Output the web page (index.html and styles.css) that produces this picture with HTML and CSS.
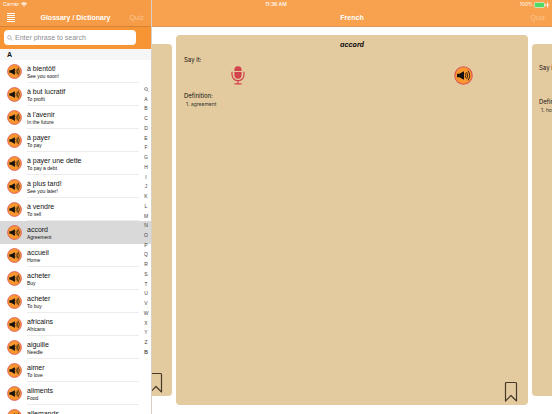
FILE: index.html
```html
<!DOCTYPE html>
<html lang="en">
<head>
    <meta charset="UTF-8">
    <meta name="viewport" content="width=device-width, initial-scale=1.0">
    <title>Glossary / Dictionary</title>
    <link rel="stylesheet" href="styles.css">
</head>
<body>
    <!-- Shared icons -->
    <svg class="icon-defs" aria-hidden="true">
        <symbol id="icon-speaker" viewBox="0 0 20 20">
            <circle cx="10" cy="10" r="9.2" fill="#fa982f" stroke="#d9525a" stroke-width="1.1"/>
            <path d="M3.2 8.2h2.3l5-2.7v9l-5-2.7H3.2z" fill="#15100a"/>
            <path d="M11.8 7.7q1.4 2.3 0 4.6M13.3 6.3q2.3 3.7 0 7.4M14.8 4.9q3.4 5.1 0 10.2" fill="none" stroke="#2b1b0c" stroke-width="1"/>
        </symbol>
        <symbol id="icon-search" viewBox="0 0 10 10">
            <circle cx="4" cy="4" r="3" fill="none" stroke="currentColor"/>
            <path d="M6.2 6.2L9.2 9.2" stroke="currentColor"/>
        </symbol>
        <symbol id="icon-bookmark" viewBox="0 0 14 21">
            <path d="M1.5 20V2.5q0-1 1-1h9q1 0 1 1V20L7 14.5z" fill="none" stroke="#46392b" stroke-width="1.2" stroke-linejoin="round"/>
        </symbol>
    </svg>

    <div class="app">
        <aside class="sidebar">
            <header class="top-bar sidebar-bar">
                <div class="status">
                    <span>Carrier</span>
                    <svg class="wifi" viewBox="0 0 12 10"><path d="M0 3.4Q6-2 12 3.4L10.7 4.8Q6 .7 1.3 4.8zM2.2 5.7Q6 2.4 9.8 5.7L8.4 7.1Q6 5 3.6 7.1zM4.4 8Q6 6.8 7.6 8L6 9.8z" fill="#fff"/></svg>
                </div>
                <div class="nav-row">
                    <button class="menu-btn" type="button" aria-label="Menu">
                        <svg viewBox="0 0 8 9"><path d="M0 .5h8M0 2.5h8M0 4.5h8M0 6.5h8M0 8.5h8" stroke="#fff" stroke-width="1"/></svg>
                    </button>
                    <h1>Glossary / Dictionary</h1>
                    <button class="quiz-btn" type="button">Quiz</button>
                </div>
            </header>
            <div class="search-bar">
                <label class="search-box">
                    <svg class="search-icon" aria-hidden="true"><use href="#icon-search"/></svg>
                    <input type="text" placeholder="Enter phrase to search" aria-label="Enter phrase to search">
                </label>
            </div>
            <div class="glossary">
                <h2 class="letter">A</h2>
                <ul class="words" id="words"></ul>
                <nav class="letter-index" id="letter-index" aria-label="Letters"></nav>
            </div>
        </aside>

        <main class="detail">
            <header class="top-bar">
                <div class="status">
                    <span></span>
                    <span class="clock">11:36 AM</span>
                    <span class="battery">100%
                        <svg viewBox="0 0 15 6"><rect x=".4" y=".4" width="10" height="5.2" rx="1.2" fill="#4cd964" stroke="#fff" stroke-width=".6"/><path d="M11.3 2v2" stroke="#fff" stroke-width=".8"/><path d="M13.6 .6v4.8M12.4 3h2.4" stroke="#fff" stroke-width=".9"/></svg>
                    </span>
                </div>
                <div class="nav-row">
                    <span></span>
                    <h1>French</h1>
                    <button class="quiz-btn" type="button">Quiz</button>
                </div>
            </header>
            <div class="cards">
                <section class="card side-card previous">
                    <button class="bookmark" type="button" aria-label="Bookmark"><svg><use href="#icon-bookmark"/></svg></button>
                </section>
                <section class="card current">
                    <h2>accord</h2>
                    <p class="label">Say it:</p>
                    <div class="say-it">
                        <button type="button" aria-label="Record">
                            <svg class="mic" viewBox="0 0 14 20">
                                <path d="M3.2 5.3V4a3.8 3.8 0 0 1 7.6 0v1.3zM3.2 6.3h7.6v3.2a3.8 3.8 0 0 1-7.6 0z" fill="#d3424d"/>
                                <path d="M.7 6v3.2a6.3 6.3 0 0 0 12.6 0V6M7 15.5v3M3.2 18.8h7.6" fill="none" stroke="#d3424d" stroke-width="1.3"/>
                            </svg>
                        </button>
                        <button type="button" aria-label="Listen"><svg class="listen"><use href="#icon-speaker"/></svg></button>
                    </div>
                    <p class="label">Definition:</p>
                    <p class="definition">1. agreement</p>
                    <button class="bookmark" type="button" aria-label="Bookmark"><svg><use href="#icon-bookmark"/></svg></button>
                </section>
                <section class="card side-card next">
                    <p class="label">Say it:</p>
                    <p class="label next-label">Definition:</p>
                    <p class="definition">1. home</p>
                </section>
            </div>
        </main>
    </div>

    <script>
        const words = [
            ['à bientôt!', 'See you soon!'],
            ['à but lucratif', 'To profit'],
            ["à l'avenir", 'In the future'],
            ['à payer', 'To pay'],
            ['à payer une dette', 'To pay a debt'],
            ['à plus tard!', 'See you later!'],
            ['à vendre', 'To sell'],
            ['accord', 'Agreement'],
            ['accueil', 'Home'],
            ['acheter', 'Buy'],
            ['acheter', 'To buy'],
            ['africains', 'Africans'],
            ['aiguille', 'Needle'],
            ['aimer', 'To love'],
            ['aliments', 'Food'],
            ['allemands', '']
        ];
        const selected = 7;

        document.getElementById('words').innerHTML = words.map(([french, english], i) => `
            <li class="word${i === selected ? ' selected' : ''}">
                <button class="speak" type="button" aria-label="Listen"><svg><use href="#icon-speaker"/></svg></button>
                <div class="word-text">
                    <span class="french">${french}</span>
                    <span class="english">${english}</span>
                </div>
            </li>
        `).join('');

        const letters = [...'ABCDEFGHIJKLMNOPQRSTUVWXYZ', 'B'];
        document.getElementById('letter-index').innerHTML =
            '<a href="#search" aria-label="Search"><svg><use href="#icon-search"/></svg></a>' +
            letters.map((l, i) => `<a href="#${l}"${i === 26 ? ' class="last"' : ''}>${l}</a>`).join('');
    </script>
</body>
</html>
```
FILE: styles.css
```css
* {
    box-sizing: border-box;
}
body {
    margin: 0;
    font-family: "Liberation Sans", Arial, sans-serif;
    color: #111;
    background: #fff;
}
h1, h2, p, ul {
    margin: 0;
    padding: 0;
}
button {
    padding: 0;
    border: none;
    background: none;
    font-family: inherit;
    cursor: pointer;
}
svg {
    display: block;
}
.icon-defs {
    position: absolute;
    width: 0;
    height: 0;
}
.app {
    display: grid;
    grid-template-columns: minmax(152px, 27%) 1fr;
    height: 100vh;
    overflow: hidden;
}

/* Top bars */
.top-bar {
    background: #f8a250;
    color: #fff;
    border-bottom: 1px solid #e0995a;
}
.sidebar-bar {
    background: #f79c46;
    border-bottom-color: #d58437;
}
.status {
    display: flex;
    align-items: center;
    height: 9px;
    padding: 0 3px;
    font-family: Inter, sans-serif;
    font-size: 5px;
    line-height: 9px;
}
.detail .status {
    display: grid;
    grid-template-columns: 1fr auto 1fr;
    /* the clock is centred on the whole window, not on the detail pane */
    margin-left: -152px;
}
.wifi {
    width: 6px;
    height: 5px;
    margin-left: 2px;
}
.clock {
    font-weight: 500;
}
.battery {
    display: flex;
    justify-content: flex-end;
    align-items: center;
    gap: 1px;
}
.battery svg {
    width: 15px;
    height: 6px;
}
.nav-row {
    display: grid;
    grid-template-columns: 1fr auto 1fr;
    align-items: center;
    height: 17px;
    padding: 0 7px;
}
.nav-row h1 {
    font-size: 7px;
    font-weight: 700;
    line-height: 16px;
}
.menu-btn svg {
    width: 8px;
    height: 9px;
}
.quiz-btn {
    justify-self: end;
    font-size: 7px;
    color: #fbc591;
}

/* Sidebar */
.sidebar {
    display: flex;
    flex-direction: column;
    min-height: 0;
    position: relative;
    z-index: 1;
    background: #fff;
    border-right: 1px solid #d8d0c4;
}
.search-bar {
    padding: 3px 15px 4px 4px;
    background: #f79433;
}
.search-box {
    display: flex;
    align-items: center;
    gap: 2px;
    height: 15px;
    padding: 0 3px;
    border-radius: 4px;
    background: #fff;
    color: #8e8e93;
}
.search-icon {
    width: 6px;
    height: 6px;
}
.search-box input {
    flex: 1;
    min-width: 0;
    padding: 0;
    border: none;
    outline: none;
    background: none;
    font-family: inherit;
    font-size: 7px;
}
.search-box input::placeholder {
    color: #8e8e93;
}
.glossary {
    position: relative;
    flex: 1;
    min-height: 0;
    overflow: hidden;
}
.letter {
    padding-left: 7px;
    background: #f6f6f6;
    font-size: 7px;
    font-weight: 700;
    line-height: 11px;
}
.words {
    list-style: none;
}
.word {
    display: flex;
    height: 23px;
    padding: 0 12px 0 7px;
    gap: 5px;
    align-items: center;
}
.word.selected {
    background: #d9d9d9;
}
.speak svg {
    width: 15px;
    height: 15px;
}
.word-text {
    display: flex;
    flex-direction: column;
    flex: 1;
    height: 23px;
    padding-top: 4px;
    border-bottom: 1px solid #ececec;
}
.word.selected .word-text {
    border-bottom-color: transparent;
}
.french {
    font-size: 7px;
    line-height: 9px;
}
.english {
    font-size: 5px;
    line-height: 7px;
}
.letter-index {
    position: absolute;
    top: 36px;
    right: 1px;
    display: flex;
    flex-direction: column;
    justify-content: space-between;
    align-items: center;
    width: 8px;
    height: 272px;
}
.letter-index a {
    color: #444;
    font-size: 5px;
    line-height: 9px;
    text-decoration: none;
}
.letter-index a.last {
    font-weight: 700;
}
.letter-index svg {
    width: 5px;
    height: 9px;
}

/* Flash cards */
.detail {
    display: flex;
    flex-direction: column;
    min-width: 0;
    min-height: 0;
}
.cards {
    flex: 1;
    display: grid;
    grid-template-columns: 20px 1fr 20px;
    gap: 4px;
    min-height: 0;
    padding: 8px 0 9px;
    font-family: Inter, sans-serif;
}
.card {
    display: flex;
    flex-direction: column;
    min-width: 0;
    border-radius: 4px;
    background: #e4cb9f;
    overflow: hidden;
    white-space: nowrap;
}
.side-card {
    margin: 9px 0;
}
.previous {
    border-radius: 0 4px 4px 0;
}
.next {
    padding: 19px 0 0 7px;
    border-radius: 4px 0 0 4px;
}
.next-label {
    margin-top: 25px;
}
.current {
    padding: 5px 8px 0;
}
.card h2 {
    font-size: 7px;
    font-weight: 700;
    font-style: italic;
    line-height: 10px;
    text-align: center;
}
.label {
    font-size: 6px;
    line-height: 9px;
}
.card h2 + .label {
    margin-top: 5px;
}
.definition {
    padding: 0 2px;
    font-size: 5px;
    line-height: 9px;
    color: #333;
}
.say-it {
    display: flex;
    justify-content: space-between;
    padding: 2px 14% 6px;
}
.mic {
    width: 14px;
    height: 19px;
}
.listen {
    width: 19px;
    height: 19px;
}
.bookmark {
    align-self: flex-end;
    margin: auto 2px 3px 0;
}
.bookmark svg {
    width: 14px;
    height: 21px;
}
.previous .bookmark {
    margin-right: 9px;
}
```
